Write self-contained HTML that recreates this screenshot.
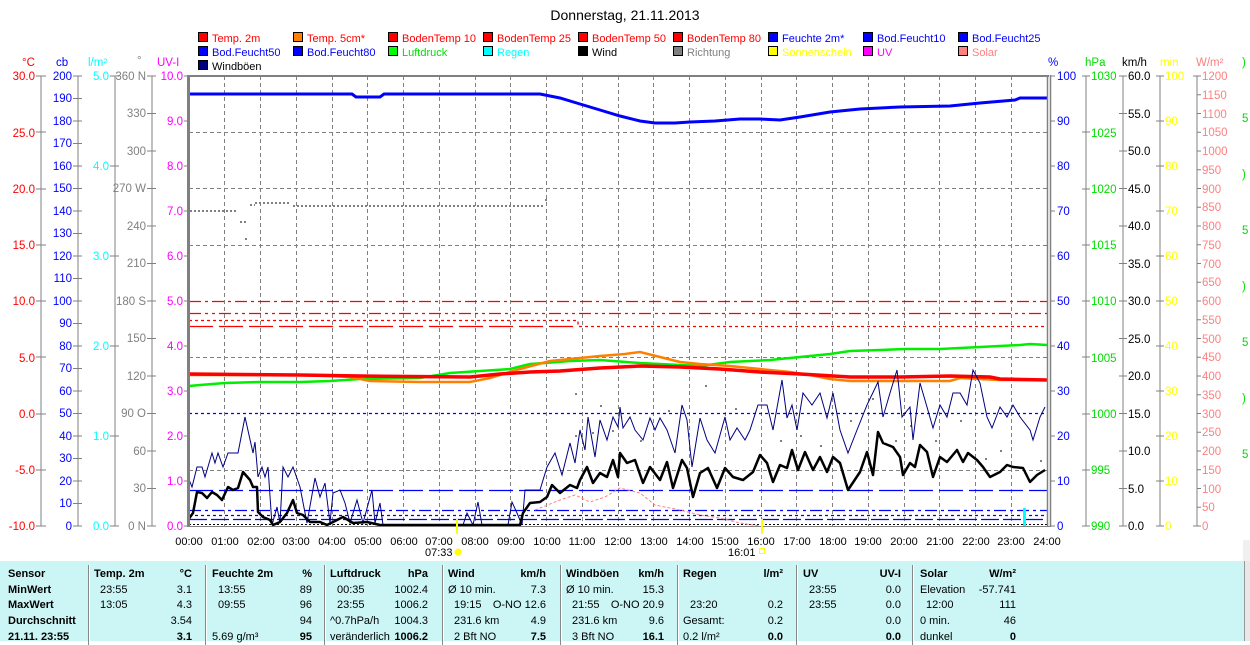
<!DOCTYPE html>
<html><head><meta charset="utf-8"><style>
html,body{margin:0;padding:0;background:#fff;width:1250px;height:641px;overflow:hidden}
svg{position:absolute;left:0;top:0;font-family:"Liberation Sans",sans-serif;font-size:11.5px}
.tb{position:absolute;left:0;top:561px;width:1244px;height:80px;background:#ccf6f6;font-family:"Liberation Sans",sans-serif;font-size:11px;color:#000}
.tb div{position:absolute;white-space:nowrap}
.b{font-weight:bold}
.sep{position:absolute;top:4px;width:1px;height:80px;background:#888;border-right:1px solid #fff}
</style></head><body>
<svg width="1250" height="561" viewBox="0 0 1250 561">
<text x="625" y="20" text-anchor="middle" font-size="14">Donnerstag, 21.11.2013</text>
<g stroke="#000" stroke-width="1">
<rect x="198.5" y="32.5" width="9" height="9" fill="#f00"/><rect x="293.5" y="32.5" width="9" height="9" fill="#ff8000"/><rect x="388.5" y="32.5" width="9" height="9" fill="#f00"/><rect x="483.5" y="32.5" width="9" height="9" fill="#f00"/><rect x="578.5" y="32.5" width="9" height="9" fill="#f00"/><rect x="673.5" y="32.5" width="9" height="9" fill="#f00"/><rect x="768.5" y="32.5" width="9" height="9" fill="#00f"/><rect x="863.5" y="32.5" width="9" height="9" fill="#00f"/><rect x="958.5" y="32.5" width="9" height="9" fill="#00f"/>
<rect x="198.5" y="46.5" width="9" height="9" fill="#00f"/><rect x="293.5" y="46.5" width="9" height="9" fill="#00f"/><rect x="388.5" y="46.5" width="9" height="9" fill="#0f0"/><rect x="483.5" y="46.5" width="9" height="9" fill="#0ff"/><rect x="578.5" y="46.5" width="9" height="9" fill="#000"/><rect x="673.5" y="46.5" width="9" height="9" fill="#808080"/><rect x="768.5" y="46.5" width="9" height="9" fill="#ff0"/><rect x="863.5" y="46.5" width="9" height="9" fill="#f0f"/><rect x="958.5" y="46.5" width="9" height="9" fill="#ff8080"/>
<rect x="198.5" y="60.5" width="9" height="9" fill="#000080"/>
</g>
<g font-size="11">
<text x="212" y="42" fill="#f00">Temp. 2m</text><text x="307" y="42" fill="#f00">Temp. 5cm*</text><text x="402" y="42" fill="#f00">BodenTemp 10</text><text x="497" y="42" fill="#f00">BodenTemp 25</text><text x="592" y="42" fill="#f00">BodenTemp 50</text><text x="687" y="42" fill="#f00">BodenTemp 80</text><text x="782" y="42" fill="#00f">Feuchte 2m*</text><text x="877" y="42" fill="#00f">Bod.Feucht10</text><text x="972" y="42" fill="#00f">Bod.Feucht25</text>
<text x="212" y="56" fill="#00f">Bod.Feucht50</text><text x="307" y="56" fill="#00f">Bod.Feucht80</text><text x="402" y="56" fill="#0d0">Luftdruck</text><text x="497" y="56" fill="#0ff">Regen</text><text x="592" y="56" fill="#000">Wind</text><text x="687" y="56" fill="#808080">Richtung</text><text x="782" y="56" fill="#ff0">Sonnenschein</text><text x="877" y="56" fill="#f0f">UV</text><text x="972" y="56" fill="#ff8080">Solar</text>
<text x="212" y="70" fill="#000">Windböen</text>
</g>
<text x="22" y="66" fill="#f00">°C</text><text x="56" y="66" fill="#00f">cb</text><text x="88" y="66" fill="#0ff">l/m²</text><text x="137" y="64" fill="#808080">°</text><text x="157" y="66" fill="#f0f">UV-I</text>
<text x="1048" y="66" fill="#00f">%</text><text x="1085" y="66" fill="#0d0">hPa</text><text x="1122" y="66" fill="#000">km/h</text><text x="1160" y="66" fill="#ff0">min</text><text x="1196" y="66" fill="#ff8080">W/m²</text>
<g stroke="#808080" stroke-width="1">
<line x1="41" y1="76" x2="41" y2="526"/><line x1="78" y1="76" x2="78" y2="526"/><line x1="115" y1="76" x2="115" y2="526"/><line x1="152" y1="76" x2="152" y2="526"/>
<line x1="1086" y1="76" x2="1086" y2="526"/><line x1="1123" y1="76" x2="1123" y2="526"/><line x1="1160" y1="76" x2="1160" y2="526"/><line x1="1197" y1="76" x2="1197" y2="526"/>
</g>
<g fill="#f00" text-anchor="end"><text x="35" y="80">30.0</text><text x="35" y="137">25.0</text><text x="35" y="193">20.0</text><text x="35" y="249">15.0</text><text x="35" y="305">10.0</text><text x="35" y="362">5.0</text><text x="35" y="418">0.0</text><text x="35" y="474">-5.0</text><text x="35" y="530">-10.0</text></g>
<g stroke="#808080"><path d="M36 76h10M36 132h10M36 189h10M36 245h10M36 301h10M36 357h10M36 414h10M36 470h10M36 526h10M73 76h9M73 98.5h9M73 121h9M73 143.5h9M73 166h9M73 188.5h9M73 211h9M73 233.5h9M73 256h9M73 278.5h9M73 301h9M73 323.5h9M73 346h9M73 368.5h9M73 391h9M73 413.5h9M73 436h9M73 458.5h9M73 481h9M73 503.5h9M73 526h9M110 76h9M110 166h9M110 256h9M110 346h9M110 436h9M110 526h9M147 76h9M147 113.5h9M147 151h9M147 188.5h9M147 226h9M147 263.5h9M147 301h9M147 338.5h9M147 376h9M147 413.5h9M147 451h9M147 488.5h9M147 526h9M184 76h5M184 121h5M184 166h5M184 211h5M184 256h5M184 301h5M184 346h5M184 391h5M184 436h5M184 481h5M184 526h5"/></g>
<g fill="#00f" text-anchor="end"><text x="72" y="80">200</text><text x="72" y="102">190</text><text x="72" y="125">180</text><text x="72" y="147">170</text><text x="72" y="170">160</text><text x="72" y="192">150</text><text x="72" y="215">140</text><text x="72" y="237">130</text><text x="72" y="260">120</text><text x="72" y="282">110</text><text x="72" y="305">100</text><text x="72" y="327">90</text><text x="72" y="350">80</text><text x="72" y="372">70</text><text x="72" y="395">60</text><text x="72" y="417">50</text><text x="72" y="440">40</text><text x="72" y="462">30</text><text x="72" y="485">20</text><text x="72" y="507">10</text><text x="72" y="530">0</text></g>
<g fill="#0ff" text-anchor="end"><text x="109" y="80">5.0</text><text x="109" y="170">4.0</text><text x="109" y="260">3.0</text><text x="109" y="350">2.0</text><text x="109" y="440">1.0</text><text x="109" y="530">0.0</text></g>
<g fill="#808080" text-anchor="end"><text x="146" y="80">360 N</text><text x="146" y="117">330</text><text x="146" y="155">300</text><text x="146" y="192">270 W</text><text x="146" y="230">240</text><text x="146" y="267">210</text><text x="146" y="305">180 S</text><text x="146" y="342">150</text><text x="146" y="380">120</text><text x="146" y="417">90 O</text><text x="146" y="455">60</text><text x="146" y="492">30</text><text x="146" y="530">0 N</text></g>
<g fill="#f0f" text-anchor="end"><text x="183" y="80">10.0</text><text x="183" y="125">9.0</text><text x="183" y="170">8.0</text><text x="183" y="215">7.0</text><text x="183" y="260">6.0</text><text x="183" y="305">5.0</text><text x="183" y="350">4.0</text><text x="183" y="395">3.0</text><text x="183" y="440">2.0</text><text x="183" y="485">1.0</text><text x="183" y="530">0.0</text></g>
<g stroke="#808080"><path d="M1050 76h5M1050 121h5M1050 166h5M1050 211h5M1050 256h5M1050 301h5M1050 346h5M1050 391h5M1050 436h5M1050 481h5M1050 526h5M1082 76h8M1082 132h8M1082 189h8M1082 245h8M1082 301h8M1082 357h8M1082 414h8M1082 470h8M1082 526h8M1119 76h8M1119 113.5h8M1119 151h8M1119 188.5h8M1119 226h8M1119 263.5h8M1119 301h8M1119 338.5h8M1119 376h8M1119 413.5h8M1119 451h8M1119 488.5h8M1119 526h8M1156 76h8M1156 121h8M1156 166h8M1156 211h8M1156 256h8M1156 301h8M1156 346h8M1156 391h8M1156 436h8M1156 481h8M1156 526h8M1193 76h8M1197 94.75h4M1197 113.5h4M1197 132.25h4M1197 151h4M1197 169.75h4M1197 188.5h4M1197 207.25h4M1197 226h4M1197 244.75h4M1197 263.5h4M1197 282.25h4M1197 301h4M1197 319.75h4M1197 338.5h4M1197 357.25h4M1197 376h4M1197 394.75h4M1197 413.5h4M1197 432.25h4M1197 451h4M1197 469.75h4M1197 488.5h4M1197 507.25h4M1193 526h8"/></g>
<g fill="#00f"><text x="1057" y="80">100</text><text x="1057" y="125">90</text><text x="1057" y="170">80</text><text x="1057" y="215">70</text><text x="1057" y="260">60</text><text x="1057" y="305">50</text><text x="1057" y="350">40</text><text x="1057" y="395">30</text><text x="1057" y="440">20</text><text x="1057" y="485">10</text><text x="1057" y="530">0</text></g>
<g fill="#0d0"><text x="1091" y="80">1030</text><text x="1091" y="137">1025</text><text x="1091" y="193">1020</text><text x="1091" y="249">1015</text><text x="1091" y="305">1010</text><text x="1091" y="362">1005</text><text x="1091" y="418">1000</text><text x="1091" y="474">995</text><text x="1091" y="530">990</text></g>
<g fill="#000"><text x="1128" y="80">60.0</text><text x="1128" y="118">55.0</text><text x="1128" y="155">50.0</text><text x="1128" y="193">45.0</text><text x="1128" y="230">40.0</text><text x="1128" y="268">35.0</text><text x="1128" y="305">30.0</text><text x="1128" y="343">25.0</text><text x="1128" y="380">20.0</text><text x="1128" y="418">15.0</text><text x="1128" y="455">10.0</text><text x="1128" y="493">5.0</text><text x="1128" y="530">0.0</text></g>
<g fill="#ff0"><text x="1165" y="80">100</text><text x="1165" y="125">90</text><text x="1165" y="170">80</text><text x="1165" y="215">70</text><text x="1165" y="260">60</text><text x="1165" y="305">50</text><text x="1165" y="350">40</text><text x="1165" y="395">30</text><text x="1165" y="440">20</text><text x="1165" y="485">10</text><text x="1165" y="530">0</text></g>
<g fill="#ff8080"><text x="1202" y="80">1200</text><text x="1202" y="99">1150</text><text x="1202" y="118">1100</text><text x="1202" y="136">1050</text><text x="1202" y="155">1000</text><text x="1202" y="174">950</text><text x="1202" y="193">900</text><text x="1202" y="211">850</text><text x="1202" y="230">800</text><text x="1202" y="249">750</text><text x="1202" y="268">700</text><text x="1202" y="286">650</text><text x="1202" y="305">600</text><text x="1202" y="324">550</text><text x="1202" y="343">500</text><text x="1202" y="361">450</text><text x="1202" y="380">400</text><text x="1202" y="399">350</text><text x="1202" y="418">300</text><text x="1202" y="436">250</text><text x="1202" y="455">200</text><text x="1202" y="474">150</text><text x="1202" y="493">100</text><text x="1202" y="511">50</text><text x="1202" y="530">0</text></g>
<g fill="#0d0"><text x="1242" y="66">)</text><text x="1242" y="122">5</text><text x="1242" y="178">)</text><text x="1242" y="234">5</text><text x="1242" y="290">)</text><text x="1242" y="346">5</text><text x="1242" y="402">)</text><text x="1242" y="458">5</text></g>
<g stroke="#808080" stroke-dasharray="4,3" stroke-width="1">
<path d="M189 132.5h858M189 188.5h858M189 245.5h858M189 357.5h858M189 470.5h858"/>
<path d="M224.5 76v450M260.5 76v450M296.5 76v450M332.5 76v450M367.5 76v450M403.5 76v450M439.5 76v450M475.5 76v450M510.5 76v450M546.5 76v450M582.5 76v450M618.5 76v450M653.5 76v450M689.5 76v450M725.5 76v450M761.5 76v450M796.5 76v450M832.5 76v450M868.5 76v450M904.5 76v450M939.5 76v450M975.5 76v450M1011.5 76v450"/>
</g>
<g stroke="#f00" stroke-width="1.3" fill="none">
<path d="M189 301.5h858" stroke-dasharray="12,4,3,4"/>
<path d="M189 313.5h858" stroke-dasharray="12,4,3,4,3,4"/>
<path d="M189 320.5h389v6h469" stroke-dasharray="3,3"/>
<path d="M189 326.5h389" stroke-dasharray="24,6"/>
</g>
<g stroke="#00f" stroke-width="1.3" fill="none">
<path d="M189 413.5h858" stroke-dasharray="3,3"/>
<path d="M189 490.5h858" stroke-dasharray="24,6"/>
<path d="M189 510.5h858" stroke-dasharray="12,4,3,4"/>
<path d="M189 515.5h858" stroke-dasharray="3,3"/>
<path d="M189 519.5h858" stroke-dasharray="18,4"/>
</g>
<path d="M189 524.5h858" stroke="#000" stroke-dasharray="2,2"/>
<path d="M190 211h46M240 222h6M246 238v2M250 205h5M255 203h35M293 206h250M545 200h2" stroke="#808080" stroke-width="2" stroke-dasharray="2,2"/>
<g fill="#808080"><rect x="575" y="393" width="2" height="2"/><rect x="600" y="405" width="2" height="2"/><rect x="612" y="430" width="2" height="2"/><rect x="640" y="440" width="2" height="2"/><rect x="668" y="410" width="2" height="2"/><rect x="705" y="385" width="2" height="2"/><rect x="735" y="408" width="2" height="2"/><rect x="780" y="440" width="2" height="2"/><rect x="800" y="435" width="2" height="2"/><rect x="820" y="445" width="2" height="2"/><rect x="850" y="420" width="2" height="2"/><rect x="872" y="398" width="2" height="2"/><rect x="895" y="440" width="2" height="2"/><rect x="910" y="425" width="2" height="2"/><rect x="935" y="440" width="2" height="2"/><rect x="960" y="420" width="2" height="2"/><rect x="985" y="458" width="2" height="2"/><rect x="1000" y="450" width="2" height="2"/><rect x="1040" y="460" width="2" height="2"/><rect x="575" y="435" width="2" height="2"/><rect x="592" y="432" width="2" height="2"/></g>
<path d="M535 510L560 500 575 495 590 502 605 497 620 488 640 493 655 505 680 510 700 515 720 518 740 523 760 526" stroke="#ff8080" fill="none" stroke-dasharray="3,2"/>
<path d="M189 94H352L356 97H380L384 94H540L560 98 580 104 600 110 620 116 640 121 655 123 675 123 690 122 715 121 740 119 760 119 780 120 800 117 830 112 860 109 900 107 950 106 980 103 1015 100 1020 98H1047" stroke="#00f" stroke-width="3" fill="none"/>
<path d="M189 386L200 385 225 383 260 382 300 382 330 381 360 379 420 378 450 373 480 371 510 369 530 364 545 363 570 361 600 360 640 363 660 364 700 366 730 362 770 360 800 357 830 354 850 351 880 350 905 349 940 349 980 347 1020 345 1030 344 1047 345" stroke="#0e0" stroke-width="2.5" fill="none"/>
<path d="M189 375L300 375 330 376 350 377 370 381 420 382 470 382 490 378 520 369 550 361 580 358 600 356 625 354 640 352 660 357 680 362 700 364 730 366 760 369 790 372 810 375 830 379 850 381 900 381 950 381 960 378 980 379 1000 380 1047 380" stroke="#ff8000" stroke-width="2.5" fill="none"/>
<path d="M189 374L300 375 360 376 470 377 500 374 530 372 560 371 600 368 640 366 680 367 720 369 760 372 800 374 850 377 900 377 950 376 990 377 1000 379 1047 380" stroke="#f00" stroke-width="3.5" fill="none"/>
<path d="M188 477L192 487 197 467 202 467 205 477 212 453 215 463 218 453 223 467 228 453 238 453 245 417 253 453 255 442 258 477 262 467 265 477 268 467 272 525 277 507 280 523 283 467 288 477 293 467 300 487 307 523 315 478 320 497 325 483 330 523 333 493 340 490 345 503 350 523 357 500 363 523 372 490 375 523 380 503 383 525 463 525 467 513 473 525 478 502 482 525 508 525 512 502 517 513 522 525 525 490 540 490 547 467 555 453 562 475 570 443 575 463 580 430 585 450 588 417 595 457 600 420 607 440 613 417 618 427 620 407 623 428 630 417 635 430 643 440 650 418 655 430 660 418 667 430 675 453 682 405 687 420 692 467 700 418 707 440 715 453 725 417 730 440 737 428 745 440 750 430 758 405 767 405 773 430 782 380 787 418 792 405 797 430 803 393 812 405 820 393 827 418 833 393 840 430 848 453 857 430 867 405 878 382 883 417 890 393 897 370 902 417 910 407 913 440 920 383 927 407 933 428 940 405 947 417 953 393 960 393 967 405 973 370 980 383 987 417 992 428 1000 407 1007 417 1013 405 1020 417 1030 430 1033 440 1040 417 1045 407" stroke="#000080" stroke-width="1" fill="none"/>
<path d="M188 520L193 513 197 492 202 493 207 498 212 492 217 495 222 500 228 487 233 490 238 488 243 472 250 480 253 487 257 487 258 512 263 517 270 520 273 525 280 522 287 513 293 500 297 513 303 515 310 522 320 522 327 525 343 517 353 523 367 522 380 525 520 525 523 513 530 503 540 502 547 497 552 485 560 493 570 485 577 488 580 480 587 467 593 483 600 473 607 477 613 460 618 477 620 453 627 463 635 460 643 483 650 467 660 480 667 462 673 488 682 460 687 468 693 497 700 473 708 468 717 488 725 468 733 477 743 480 753 472 760 455 767 463 773 482 780 465 787 468 792 450 798 470 805 452 813 470 820 457 827 472 833 457 840 463 848 490 860 472 867 452 873 475 878 432 883 443 893 447 900 457 903 475 910 463 915 467 920 445 927 452 933 477 940 457 947 462 957 450 963 462 968 453 977 460 983 467 990 477 1000 472 1007 465 1013 467 1023 468 1030 482 1037 475 1045 470" stroke="#000" stroke-width="2.5" fill="none" stroke-linejoin="round"/>
<rect x="1023" y="508" width="3" height="18" fill="#0ff"/>
<rect x="187" y="75" width="3" height="452" fill="#808080"/>
<rect x="187" y="75" width="862" height="2" fill="#808080"/>
<path d="M1047.5 75v452M1050.5 75v452" stroke="#808080" stroke-width="1.5"/>
<path d="M188 526.5h862" stroke="#808080"/>
<path d="M457 519v15M762 519v15" stroke="#ff0" stroke-width="2"/>
<g text-anchor="middle" font-size="11"><text x="189" y="545">00:00</text><text x="225" y="545">01:00</text><text x="261" y="545">02:00</text><text x="296" y="545">03:00</text><text x="332" y="545">04:00</text><text x="368" y="545">05:00</text><text x="404" y="545">06:00</text><text x="439" y="545">07:00</text><text x="475" y="545">08:00</text><text x="511" y="545">09:00</text><text x="547" y="545">10:00</text><text x="582" y="545">11:00</text><text x="618" y="545">12:00</text><text x="654" y="545">13:00</text><text x="690" y="545">14:00</text><text x="725" y="545">15:00</text><text x="761" y="545">16:00</text><text x="797" y="545">17:00</text><text x="833" y="545">18:00</text><text x="868" y="545">19:00</text><text x="904" y="545">20:00</text><text x="940" y="545">21:00</text><text x="976" y="545">22:00</text><text x="1011" y="545">23:00</text><text x="1047" y="545">24:00</text></g>
<text x="425" y="556" font-size="11">07:33</text><circle cx="458" cy="552" r="3.5" fill="#ff0"/>
<text x="728" y="556" font-size="11">16:01</text><rect x="759.5" y="548.5" width="5" height="5" fill="none" stroke="#ff0"/>
<rect x="1243" y="540" width="7" height="21" fill="#f0f0f0"/>
</svg>
<div class="tb">
<div class="sep" style="left:88px"></div><div class="sep" style="left:205px"></div><div class="sep" style="left:324px"></div><div class="sep" style="left:442px"></div><div class="sep" style="left:560px"></div><div class="sep" style="left:677px"></div><div class="sep" style="left:796px"></div><div class="sep" style="left:912px"></div>
<div class="b" style="left:8px;top:7px">Sensor</div><div class="b" style="left:8px;top:23px">MinWert</div><div class="b" style="left:8px;top:38px">MaxWert</div><div class="b" style="left:8px;top:54px">Durchschnitt</div><div class="b" style="left:8px;top:70px">21.11. 23:55</div>
<div class="b" style="left:94px;top:7px">Temp. 2m</div><div class="b" style="right:1052px;top:7px">°C</div>
<div style="left:100px;top:23px">23:55</div><div style="right:1052px;top:23px">3.1</div><div style="left:100px;top:38px">13:05</div><div style="right:1052px;top:38px">4.3</div><div style="right:1052px;top:54px">3.54</div><div class="b" style="right:1052px;top:70px">3.1</div>
<div class="b" style="left:212px;top:7px">Feuchte 2m</div><div class="b" style="right:932px;top:7px">%</div>
<div style="left:218px;top:23px">13:55</div><div style="right:932px;top:23px">89</div><div style="left:218px;top:38px">09:55</div><div style="right:932px;top:38px">96</div><div style="right:932px;top:54px">94</div><div style="left:212px;top:70px">5.69 g/m³</div><div class="b" style="right:932px;top:70px">95</div>
<div class="b" style="left:330px;top:7px">Luftdruck</div><div class="b" style="right:816px;top:7px">hPa</div>
<div style="left:337px;top:23px">00:35</div><div style="right:816px;top:23px">1002.4</div><div style="left:337px;top:38px">23:55</div><div style="right:816px;top:38px">1006.2</div><div style="left:330px;top:54px">^0.7hPa/h</div><div style="right:816px;top:54px">1004.3</div><div style="left:330px;top:70px">veränderlich</div><div class="b" style="right:816px;top:70px">1006.2</div>
<div class="b" style="left:448px;top:7px">Wind</div><div class="b" style="right:698px;top:7px">km/h</div>
<div style="left:448px;top:23px">Ø 10 min.</div><div style="right:698px;top:23px">7.3</div><div style="left:454px;top:38px">19:15</div><div style="right:698px;top:38px">O-NO 12.6</div><div style="left:454px;top:54px">231.6 km</div><div style="right:698px;top:54px">4.9</div><div style="left:454px;top:70px">2 Bft NO</div><div class="b" style="right:698px;top:70px">7.5</div>
<div class="b" style="left:566px;top:7px">Windböen</div><div class="b" style="right:580px;top:7px">km/h</div>
<div style="left:566px;top:23px">Ø 10 min.</div><div style="right:580px;top:23px">15.3</div><div style="left:572px;top:38px">21:55</div><div style="right:580px;top:38px">O-NO 20.9</div><div style="left:572px;top:54px">231.6 km</div><div style="right:580px;top:54px">9.6</div><div style="left:572px;top:70px">3 Bft NO</div><div class="b" style="right:580px;top:70px">16.1</div>
<div class="b" style="left:683px;top:7px">Regen</div><div class="b" style="right:461px;top:7px">l/m²</div>
<div style="left:690px;top:38px">23:20</div><div style="right:461px;top:38px">0.2</div><div style="left:683px;top:54px">Gesamt:</div><div style="right:461px;top:54px">0.2</div><div style="left:683px;top:70px">0.2 l/m²</div><div class="b" style="right:461px;top:70px">0.0</div>
<div class="b" style="left:803px;top:7px">UV</div><div class="b" style="right:343px;top:7px">UV-I</div>
<div style="left:809px;top:23px">23:55</div><div style="right:343px;top:23px">0.0</div><div style="left:809px;top:38px">23:55</div><div style="right:343px;top:38px">0.0</div><div style="right:343px;top:54px">0.0</div><div class="b" style="right:343px;top:70px">0.0</div>
<div class="b" style="left:920px;top:7px">Solar</div><div class="b" style="right:228px;top:7px">W/m²</div>
<div style="left:920px;top:23px">Elevation</div><div style="right:228px;top:23px">-57.741</div><div style="left:926px;top:38px">12:00</div><div style="right:228px;top:38px">111</div><div style="left:920px;top:54px">0 min.</div><div style="right:228px;top:54px">46</div><div style="left:920px;top:70px">dunkel</div><div class="b" style="right:228px;top:70px">0</div>
</div>
<div style="position:absolute;left:1244px;top:561px;width:6px;height:80px;background:#e8e8e8;border-left:1px solid #999"></div>
</body></html>
